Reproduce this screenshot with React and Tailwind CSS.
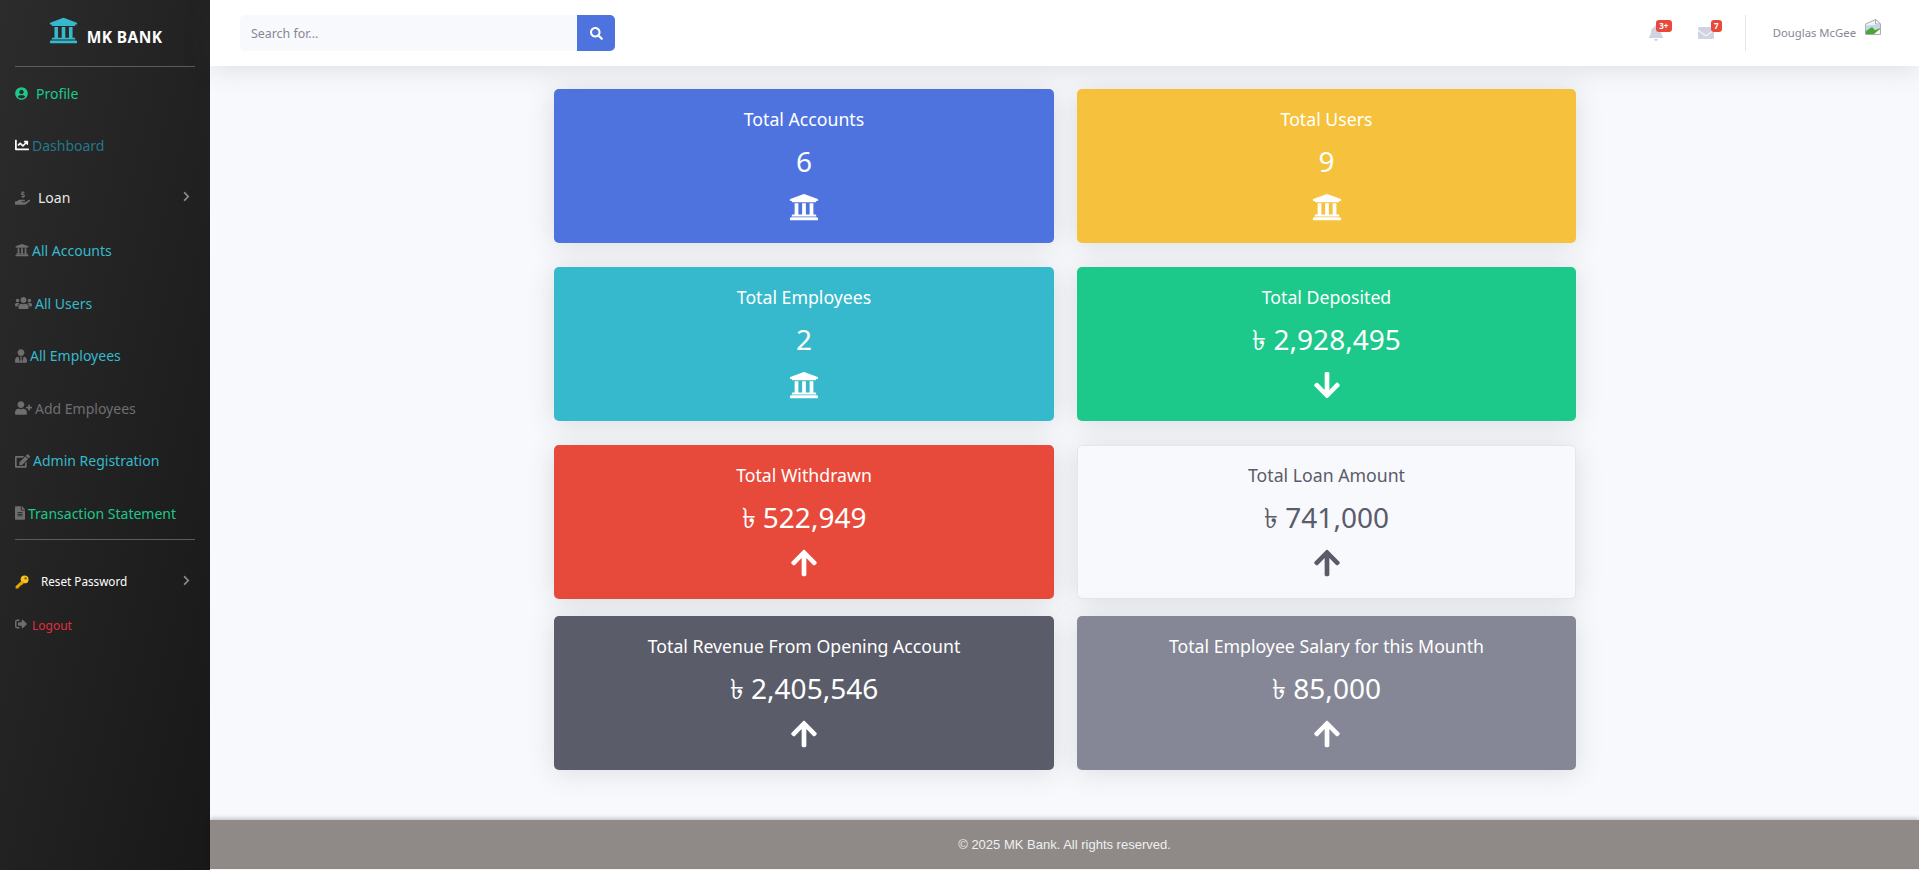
import React from 'react';
import {
  FaUniversity, FaUserCircle, FaChartLine, FaHandHoldingUsd, FaUsers, FaUserTie, FaUserPlus,
  FaEdit, FaFileAlt, FaChevronRight, FaSearch, FaBell, FaEnvelope, FaArrowUp, FaArrowDown, FaSignOutAlt,
} from 'react-icons/fa';

const font = 'font-["Noto_Sans","Open_Sans",sans-serif]';

const links = [
  { label: 'Dashboard', icon: FaChartLine, iconClass: 'text-white', text: 'text-[#22788a]', gap: 'gap-[3px]' },
  { label: 'Loan', icon: FaHandHoldingUsd, iconClass: 'text-[#6e6e6e]', text: 'text-[#e8e8e8]', gap: 'gap-[8px]', arrow: true, w: 'w-[15px]' },
  { label: 'All Accounts', icon: FaUniversity, iconClass: 'text-[#6e6e6e]', text: 'text-[#36b9cc]', gap: 'gap-[3px]', w: 'w-[14px]' },
  { label: 'All Users', icon: FaUsers, iconClass: 'text-[#6e6e6e]', text: 'text-[#36b9cc]', gap: 'gap-[3px]', w: 'w-[17px]' },
  { label: 'All Employees', icon: FaUserTie, iconClass: 'text-[#6e6e6e]', text: 'text-[#36b9cc]', gap: 'gap-[3px]', w: 'w-[12px]' },
  { label: 'Add Employees', icon: FaUserPlus, iconClass: 'text-[#6e6e6e]', text: 'text-[#6e6e73]', gap: 'gap-[3px]', w: 'w-[17px]' },
  { label: 'Admin Registration', icon: FaEdit, iconClass: 'text-[#6e6e6e]', text: 'text-[#36b9cc]', gap: 'gap-[3px]', w: 'w-[15px]' },
  { label: 'Transaction Statement', icon: FaFileAlt, iconClass: 'text-[#6e6e6e]', text: 'text-[#1cc88a]', gap: 'gap-[3px]', w: 'w-[10px]' },
];

const cards = [
  { title: 'Total Accounts', value: '6', icon: FaUniversity, bg: 'bg-[#4e73df]' },
  { title: 'Total Users', value: '9', icon: FaUniversity, bg: 'bg-[#f6c23e]' },
  { title: 'Total Employees', value: '2', icon: FaUniversity, bg: 'bg-[#36b9cc]' },
  { title: 'Total Deposited', value: '৳ 2,928,495', icon: FaArrowDown, bg: 'bg-[#1cc88a]' },
  { title: 'Total Withdrawn', value: '৳ 522,949', icon: FaArrowUp, bg: 'bg-[#e74a3b]' },
  { title: 'Total Loan Amount', value: '৳ 741,000', icon: FaArrowUp, bg: 'bg-[#f8f9fc] border border-[#e3e6f0]', dark: true },
  { title: 'Total Revenue From Opening Account', value: '৳ 2,405,546', icon: FaArrowUp, bg: 'bg-[#5a5c69]' },
  { title: 'Total Employee Salary for this Mounth', value: '৳ 85,000', icon: FaArrowUp, bg: 'bg-[#858796]' },
];

const KeyEmoji = () => (
  <svg width="14" height="14" viewBox="0 0 14 14">
    <circle cx="9.6" cy="4.4" r="3.9" fill="#f9c41e" />
    <path d="M7 5.5 L0.6 11.2 L0.6 13.4 L3.4 13.4 L4 12 L5.3 11.6 L5.6 10.3 L7.2 9.9 L9 7.4 Z" fill="#e9a400" />
    <circle cx="10.6" cy="3.4" r="1.1" fill="#6d4c00" />
  </svg>
);

// browser's broken image glyph
const BrokenImage = () => (
  <svg width="16" height="16" viewBox="0 0 16 16">
    <path d="M0.5 5 L10.5 0.5 L15.5 5 L15.5 15.5 L0.5 15.5 Z" fill="#eef1f5" stroke="#a9adb3" />
    <path d="M10.5 0.5 L10.5 5 L15.5 5 Z" fill="#fff" stroke="#a9adb3" />
    <path d="M0.5 6.5 L15 5.5 L15 9 L1 12 Z" fill="#c9d6e6" />
    <path d="M1 15 L1 12 L7 8 L10 11 L15 9 L15 15 Z" fill="#4aa53a" />
    <path d="M9 15 L15 10 L15 15 Z" fill="#f4f6f8" />
  </svg>
);

const Card = ({ title, value, icon: Icon, bg, dark }) => (
  <div className={`${bg} ${dark ? 'text-[#5a5c69] pt-[17px]' : 'text-white pt-[18px]'} h-[154px] rounded-[5px] flex flex-col items-center shadow-[0_2px_28px_0_rgba(58,59,69,0.15)]`}>
    <h5 className="text-[17.7px] leading-[24px]">{title}</h5>
    <h2 className="text-[28px] leading-[38px] mt-[11px]">{value}</h2>
    <Icon className="text-[30px] mt-[12px]" />
  </div>
);

export default function App() {
  return (
    <div className={`${font} flex w-full h-screen overflow-hidden bg-[#f8f9fc]`}>
      {/* Sidebar */}
      <aside className="w-[210px] shrink-0 h-full px-[15px] bg-gradient-to-br from-[#2c2c2c] to-[#181818]">
        <div className="h-[67px] flex items-center justify-center border-b border-[#5c5c5c] gap-[9px] pl-[1px]">
          <FaUniversity className="text-[#36b9cc] text-[29px] mb-[6px]" />
          <span className="text-white font-bold text-[15.5px] tracking-[0.4px] mt-[9px]">MK BANK</span>
        </div>
        <div className="flex items-center h-[51px] mt-[1px] gap-[8px] text-[#1cc88a] text-[14px]">
          <FaUserCircle className="text-[13px]" />
          <span>Profile</span>
        </div>
        {links.map(({ label, icon: Icon, iconClass, text, gap, arrow, w }) => (
          <div key={label} className={`flex items-center h-[52.6px] text-[14px] ${gap} ${text}`}>
            <Icon className={`${iconClass} ${w || 'w-[14px]'} h-[14px] shrink-0`} />
            <span className="whitespace-nowrap">{label}</span>
            {arrow && <FaChevronRight className="ml-auto mr-[3px] text-[#8a8a8a] text-[11px] mb-[2px]" />}
          </div>
        ))}
        <div className="border-t border-[#5c5c5c] mt-[-1px]" />
        <div className="flex items-center h-[44px] mt-[20px] gap-[12px] text-white text-[11.7px]">
          <KeyEmoji />
          <span>Reset Password</span>
          <FaChevronRight className="ml-auto mr-[3px] text-[#8a8a8a] text-[11px] mb-[2px]" />
        </div>
        <div className="flex items-center h-[44px] gap-[5px] text-[#e02d3c] text-[12px]">
          <FaSignOutAlt className="text-[#6e6e6e] text-[12px] mb-[3px]" />
          <span>Logout</span>
        </div>
      </aside>

      <div className="flex-1 flex flex-col min-w-0 h-full">
        {/* Topbar */}
        <header className="h-[66px] shrink-0 bg-white flex items-center justify-between pl-[30px] pr-[38px] shadow-[0_2px_28px_0_rgba(58,59,69,0.15)] relative z-10">
          <div className="flex w-[375px] h-[36px]">
            <div className="flex-1 bg-[#f8f9fc] rounded-l-[5px] pl-[11px] pt-[2px] flex items-center text-[12.4px] text-[#858796]">Search for...</div>
            <div className="w-[38px] bg-[#4e73df] rounded-r-[5px] flex items-center justify-center text-white">
              <FaSearch className="text-[13px]" />
            </div>
          </div>
          <div className="flex items-center h-[36px]">
            <div className="relative mr-[34px]">
              <FaBell className="text-[#d1d3e2] text-[16px]" />
              <span className="absolute top-[-5px] left-[8px] w-[16px] h-[12px] rounded-[3px] bg-[#e74a3b] text-white text-[8px] font-bold leading-[12px] text-center">3+</span>
            </div>
            <div className="relative mr-[31px]">
              <FaEnvelope className="text-[#d1d3e2] text-[16px]" />
              <span className="absolute top-[-5px] left-[13px] w-[11px] h-[12px] rounded-[3px] bg-[#e74a3b] text-white text-[8px] font-bold leading-[12px] text-center">7</span>
            </div>
            <div className="w-px h-[36px] bg-[#e3e6f0] mr-[27px]" />
            <span className="text-[11.3px] text-[#858796] mr-[9px] mt-[1px]">Douglas McGee</span>
            <span className="mb-[12px]"><BrokenImage /></span>
          </div>
        </header>

        {/* Cards */}
        <main className="flex-1 min-h-0 pt-[23px] pl-[1px]">
          <div className="grid grid-cols-[500px_499px] gap-x-[23px] gap-y-[24px] justify-center">
            {cards.slice(0, 6).map((c) => <Card key={c.title} {...c} />)}
          </div>
          <div className="grid grid-cols-[500px_499px] gap-x-[23px] justify-center mt-[17px]">
            {cards.slice(6).map((c) => <Card key={c.title} {...c} />)}
          </div>
        </main>

        {/* Footer */}
        <footer className="h-[49px] shrink-0 mb-[1px] bg-[#8f8a88] shadow-[0_-2px_4px_rgba(0,0,0,0.2)] flex items-center justify-center text-[#f0f0f0] text-[13px] font-['Liberation_Sans',sans-serif]">
          © 2025 MK Bank. All rights reserved.
        </footer>
      </div>
    </div>
  );
}
